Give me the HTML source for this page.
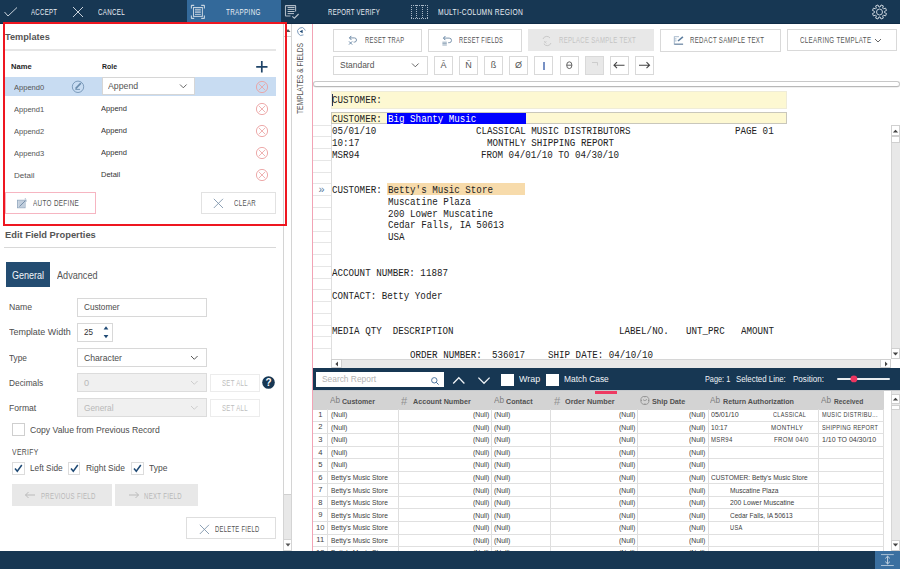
<!DOCTYPE html>
<html><head><meta charset="utf-8">
<style>
html,body{margin:0;padding:0;}
body{width:900px;height:569px;position:relative;overflow:hidden;background:#fff;font-family:'Liberation Sans', sans-serif;}
body>div, .abs{position:absolute;box-sizing:border-box;}
.t{position:absolute;white-space:pre;line-height:1;transform-origin:0 0;}
</style></head><body>
<div style="left:0px;top:0px;width:900px;height:24px;background:#173753"></div>
<div style="left:0px;top:23px;width:900px;height:1px;background:#0f2c47"></div>
<div style="left:187px;top:0px;width:94px;height:24px;background:#33699a"></div>
<svg style="position:absolute;left:3px;top:5px;" width="16" height="14" viewBox="0 0 16 14"><polyline points="1.5,7 5,11 14,2.5" fill="none" stroke="#c9d2db" stroke-width="1"/></svg>
<div id="t1" class="t" style="transform:scaleX(0.6696);left:31px;top:8.00px;font-size:9.03px;color:#e9eef3;font-weight:400;font-family:'Liberation Sans', sans-serif;letter-spacing:0.45px;">ACCEPT</div>
<svg style="position:absolute;left:72px;top:6px;" width="12" height="12" viewBox="0 0 12 12"><path d="M1,1 L11,11 M11,1 L1,11" stroke="#c9d2db" stroke-width="1"/></svg>
<div id="t2" class="t" style="transform:scaleX(0.6902);left:97.9px;top:8.00px;font-size:9.03px;color:#e9eef3;font-weight:400;font-family:'Liberation Sans', sans-serif;letter-spacing:0.45px;">CANCEL</div>
<svg style="position:absolute;left:190px;top:4px;" width="16" height="16" viewBox="0 0 16 16"><path d="M1.4,4.4 V1.8 Q1.4,1.4 1.8,1.4 H4.2 M11.2,1.4 H14 Q14.4,1.4 14.4,1.8 V4.4 M14.4,11.4 V14 Q14.4,14.4 14,14.4 H11.2 M4.2,14.4 H1.8 Q1.4,14.4 1.4,14 V11.4" fill="none" stroke="#c4d2df" stroke-width="1.1"/><rect x="3.5" y="3.5" width="8.9" height="8.9" fill="none" stroke="#c4d2df" stroke-width="1"/><path d="M5,5.3 H10.8 M5,7 H10.8 M5,8.3 H10.8 M5,10.4 H10.8" stroke="#b9c9d8" stroke-width="1"/></svg>
<div id="t3" class="t" style="transform:scaleX(0.6987);left:226.4px;top:8.00px;font-size:9.03px;color:#e9eef3;font-weight:400;font-family:'Liberation Sans', sans-serif;letter-spacing:0.45px;">TRAPPING</div>
<svg style="position:absolute;left:284px;top:4px;" width="16" height="16" viewBox="0 0 16 16"><path d="M11.6,7.5 V2 Q11.6,1.6 11.2,1.6 H1.9 Q1.5,1.6 1.5,2 V11.6 Q1.5,12 1.9,12 H6.5" fill="none" stroke="#aeb9c5" stroke-width="1.1"/><path d="M3.6,3.5 H10.6 M3.6,5.4 H10.6 M3.6,7.5 H10.6 M3.6,9.6 H10" stroke="#b9c3cd" stroke-width="1"/><polyline points="8.3,12.3 10.4,14.2 14.6,10" fill="none" stroke="#b9c3cd" stroke-width="1.1"/></svg>
<div id="t4" class="t" style="transform:scaleX(0.6652);left:327.7px;top:8.00px;font-size:9.03px;color:#e9eef3;font-weight:400;font-family:'Liberation Sans', sans-serif;letter-spacing:0.45px;">REPORT VERIFY</div>
<svg style="position:absolute;left:410px;top:4px;" width="19" height="16" viewBox="0 0 19 16"><g fill="#a9b8c8"><rect x="1" y="1" width="1" height="1"/><rect x="6" y="1" width="1" height="1"/><rect x="12" y="1" width="1" height="1"/><rect x="17" y="1" width="1" height="1"/><rect x="1" y="3" width="1" height="1"/><rect x="6" y="3" width="1" height="1"/><rect x="12" y="3" width="1" height="1"/><rect x="17" y="3" width="1" height="1"/><rect x="1" y="5" width="1" height="1"/><rect x="6" y="5" width="1" height="1"/><rect x="12" y="5" width="1" height="1"/><rect x="17" y="5" width="1" height="1"/><rect x="1" y="7" width="1" height="1"/><rect x="6" y="7" width="1" height="1"/><rect x="12" y="7" width="1" height="1"/><rect x="17" y="7" width="1" height="1"/><rect x="1" y="9" width="1" height="1"/><rect x="6" y="9" width="1" height="1"/><rect x="12" y="9" width="1" height="1"/><rect x="17" y="9" width="1" height="1"/><rect x="1" y="11" width="1" height="1"/><rect x="6" y="11" width="1" height="1"/><rect x="12" y="11" width="1" height="1"/><rect x="17" y="11" width="1" height="1"/><rect x="1" y="13" width="1" height="1"/><rect x="6" y="13" width="1" height="1"/><rect x="12" y="13" width="1" height="1"/><rect x="17" y="13" width="1" height="1"/><rect x="1" y="1" width="1" height="1"/><rect x="1" y="14" width="1" height="1"/><rect x="3" y="1" width="1" height="1"/><rect x="3" y="14" width="1" height="1"/><rect x="5" y="1" width="1" height="1"/><rect x="5" y="14" width="1" height="1"/><rect x="7" y="1" width="1" height="1"/><rect x="7" y="14" width="1" height="1"/><rect x="9" y="1" width="1" height="1"/><rect x="9" y="14" width="1" height="1"/><rect x="11" y="1" width="1" height="1"/><rect x="11" y="14" width="1" height="1"/><rect x="13" y="1" width="1" height="1"/><rect x="13" y="14" width="1" height="1"/><rect x="15" y="1" width="1" height="1"/><rect x="15" y="14" width="1" height="1"/><rect x="17" y="1" width="1" height="1"/><rect x="17" y="14" width="1" height="1"/></g></svg>
<div id="t5" class="t" style="transform:scaleX(0.7398);left:438.3px;top:8.00px;font-size:9.03px;color:#e9eef3;font-weight:400;font-family:'Liberation Sans', sans-serif;letter-spacing:0.45px;">MULTI-COLUMN REGION</div>
<svg style="position:absolute;left:871px;top:4px;" width="17" height="17" viewBox="0 0 17 17"><polygon points="9.07,3.03 10.06,0.97 12.37,1.93 11.61,4.09 12.41,4.89 14.57,4.13 15.53,6.44 13.47,7.43 13.47,8.57 15.53,9.56 14.57,11.87 12.41,11.11 11.61,11.91 12.37,14.07 10.06,15.03 9.07,12.97 7.93,12.97 6.94,15.03 4.63,14.07 5.39,11.91 4.59,11.11 2.43,11.87 1.47,9.56 3.53,8.57 3.53,7.43 1.47,6.44 2.43,4.13 4.59,4.89 5.39,4.09 4.63,1.93 6.94,0.97 7.93,3.03" fill="none" stroke="#c9d2db" stroke-width="1" stroke-linejoin="round"/><circle cx="8.5" cy="8" r="3" fill="none" stroke="#c9d2db" stroke-width="1"/></svg>
<div style="left:282.5px;top:24px;width:9.5px;height:527px;background:#fff;border-left:1px solid #d4d4d4;border-right:1px solid #d4d4d4"></div>
<div style="left:283.5px;top:36px;width:7.5px;height:0.8px;background:#d0d0d0"></div>
<svg style="position:absolute;left:283.5px;top:27px;" width="8" height="6" viewBox="0 0 8 6"><polygon points="1.5,5 4,2 6.5,5" fill="#555"/></svg>
<div style="left:283.5px;top:493.5px;width:7.5px;height:45.5px;background:#e8e8e8;border-top:1px solid #d0d0d0"></div>
<div style="left:282.5px;top:539px;width:9.5px;height:12px;background:#fff;border:1px solid #d4d4d4"></div>
<svg style="position:absolute;left:283.5px;top:542px;" width="8" height="6" viewBox="0 0 8 6"><polygon points="1.5,1.5 4,4.5 6.5,1.5" fill="#555"/></svg>
<svg style="position:absolute;left:296.5px;top:27px;" width="10" height="10" viewBox="0 0 10 10"><circle cx="4.5" cy="4.5" r="3.9" fill="none" stroke="#6d8fb3" stroke-width="0.8" stroke-dasharray="19,5" transform="rotate(60 4.5 4.5)"/><polygon points="2.6,4.5 5.6,2.8 5.6,6.2" fill="#1f4a75"/></svg>
<div id="t6" class="t" style="left:296.0px;top:113.6px;font-size:8.3px;color:#555;transform-origin:0 0;transform:rotate(-90deg) scaleX(0.8075);">TEMPLATES &amp; FIELDS</div>
<div style="left:312px;top:24px;width:1px;height:527px;background:#f2a3b5"></div>
<div id="t7" class="t" style="transform:scaleX(0.9237);left:5.4px;top:32.00px;font-size:9.96px;color:#555;font-weight:700;font-family:'Liberation Sans', sans-serif;">Templates</div>
<div style="left:5px;top:49px;width:271px;height:2px;background:#e6e6e6"></div>
<div id="t8" class="t" style="transform:scaleX(0.9602);left:11px;top:63.00px;font-size:7.89px;color:#1e1e1e;font-weight:700;font-family:'Liberation Sans', sans-serif;">Name</div>
<div id="t9" class="t" style="transform:scaleX(0.8783);left:101.7px;top:63.00px;font-size:7.89px;color:#1e1e1e;font-weight:700;font-family:'Liberation Sans', sans-serif;">Role</div>
<svg style="position:absolute;left:255px;top:60px;" width="14" height="14" viewBox="0 0 14 14"><path d="M6.8,1 V12.5 M1.2,6.8 H12.5" stroke="#1f4468" stroke-width="1.7"/></svg>
<div style="left:5px;top:77.2px;width:271px;height:18.4px;background:#c8dcf2"></div>
<svg style="position:absolute;left:71px;top:80px;" width="14" height="14" viewBox="0 0 14 14"><circle cx="7" cy="6.8" r="5.7" fill="none" stroke="#6a8cad" stroke-width="0.8"/><path d="M4.6,8.6 L9.9,3.1" fill="none" stroke="#6a8cad" stroke-width="1.6"/><path d="M4.3,9.4 H9" fill="none" stroke="#6a8cad" stroke-width="0.9"/></svg>
<div style="left:101.7px;top:77.4px;width:93.8px;height:18.1px;background:#fff;border:1px solid #d6d6d6"></div>
<div id="t10" class="t" style="transform:scaleX(0.9387);left:107.8px;top:82.00px;font-size:9.34px;color:#555;font-weight:400;font-family:'Liberation Sans', sans-serif;">Append</div>
<svg style="position:absolute;left:178.5px;top:83px;" width="9" height="7" viewBox="0 0 9 7"><polyline points="1,1.5 4.3,4.8 7.6,1.5" fill="none" stroke="#555" stroke-width="0.9"/></svg>
<div id="t11" class="t" style="transform:scaleX(0.9578);left:13.9px;top:84.00px;font-size:7.89px;color:#555;font-weight:400;font-family:'Liberation Sans', sans-serif;">Append0</div>
<svg style="position:absolute;left:255px;top:79.9px;" width="14" height="14" viewBox="0 0 14 14"><circle cx="7" cy="7" r="5.6" fill="none" stroke="#eba0a0" stroke-width="0.9"/><path d="M3.9,3.9 L10.1,10.1 M10.1,3.9 L3.9,10.1" stroke="#eba0a0" stroke-width="0.8"/></svg>
<div id="t12" class="t" style="transform:scaleX(0.9578);left:13.9px;top:106.00px;font-size:7.89px;color:#555;font-weight:400;font-family:'Liberation Sans', sans-serif;">Append1</div>
<div id="t13" class="t" style="transform:scaleX(0.9574);left:101.4px;top:105.00px;font-size:7.89px;color:#333;font-weight:400;font-family:'Liberation Sans', sans-serif;">Append</div>
<svg style="position:absolute;left:255px;top:101.9px;" width="14" height="14" viewBox="0 0 14 14"><circle cx="7" cy="7" r="5.6" fill="none" stroke="#eba0a0" stroke-width="0.9"/><path d="M3.9,3.9 L10.1,10.1 M10.1,3.9 L3.9,10.1" stroke="#eba0a0" stroke-width="0.8"/></svg>
<div id="t14" class="t" style="transform:scaleX(0.9578);left:13.9px;top:128.00px;font-size:7.89px;color:#555;font-weight:400;font-family:'Liberation Sans', sans-serif;">Append2</div>
<div id="t15" class="t" style="transform:scaleX(0.9574);left:101.4px;top:127.00px;font-size:7.89px;color:#333;font-weight:400;font-family:'Liberation Sans', sans-serif;">Append</div>
<svg style="position:absolute;left:255px;top:123.9px;" width="14" height="14" viewBox="0 0 14 14"><circle cx="7" cy="7" r="5.6" fill="none" stroke="#eba0a0" stroke-width="0.9"/><path d="M3.9,3.9 L10.1,10.1 M10.1,3.9 L3.9,10.1" stroke="#eba0a0" stroke-width="0.8"/></svg>
<div id="t16" class="t" style="transform:scaleX(0.9578);left:13.9px;top:150.00px;font-size:7.89px;color:#555;font-weight:400;font-family:'Liberation Sans', sans-serif;">Append3</div>
<div id="t17" class="t" style="transform:scaleX(0.9574);left:101.4px;top:149.00px;font-size:7.89px;color:#333;font-weight:400;font-family:'Liberation Sans', sans-serif;">Append</div>
<svg style="position:absolute;left:255px;top:145.9px;" width="14" height="14" viewBox="0 0 14 14"><circle cx="7" cy="7" r="5.6" fill="none" stroke="#eba0a0" stroke-width="0.9"/><path d="M3.9,3.9 L10.1,10.1 M10.1,3.9 L3.9,10.1" stroke="#eba0a0" stroke-width="0.8"/></svg>
<div id="t18" class="t" style="transform:scaleX(1.0178);left:13.9px;top:172.00px;font-size:7.89px;color:#555;font-weight:400;font-family:'Liberation Sans', sans-serif;">Detail</div>
<div id="t19" class="t" style="transform:scaleX(0.9533);left:101.4px;top:171.00px;font-size:7.89px;color:#333;font-weight:400;font-family:'Liberation Sans', sans-serif;">Detail</div>
<svg style="position:absolute;left:255px;top:167.9px;" width="14" height="14" viewBox="0 0 14 14"><circle cx="7" cy="7" r="5.6" fill="none" stroke="#eba0a0" stroke-width="0.9"/><path d="M3.9,3.9 L10.1,10.1 M10.1,3.9 L3.9,10.1" stroke="#eba0a0" stroke-width="0.8"/></svg>
<div style="left:5px;top:192.2px;width:90.6px;height:22.2px;background:#fff;border:1px solid #f6b5c1"></div>
<svg style="position:absolute;left:16px;top:197px;" width="12" height="12" viewBox="0 0 12 12"><rect x="1.5" y="3.2" width="7.6" height="7.6" fill="#d5dee8" stroke="#8fa6bd" stroke-width="0.8"/><path d="M2.5,5 H8 M2.5,7 H8 M2.5,9 H8" stroke="#9fb3c7" stroke-width="0.7"/><path d="M3.5,9.5 L9.5,3.5" stroke="#6f8aa5" stroke-width="0.9"/><path d="M9.3,1.2 V2.6 M10.8,3.2 H9.6 M10.6,5 L9.8,4.2" stroke="#8fa6bd" stroke-width="0.8"/></svg>
<div id="t20" class="t" style="transform:scaleX(0.7525);left:33.3px;top:199.00px;font-size:8.41px;color:#555;font-weight:400;font-family:'Liberation Sans', sans-serif;letter-spacing:0.45px;">AUTO DEFINE</div>
<div style="left:200.6px;top:192.2px;width:75.2px;height:22.2px;background:#fff;border:1px solid #e2e2e2"></div>
<svg style="position:absolute;left:213px;top:197.5px;" width="11" height="11" viewBox="0 0 11 11"><path d="M0.8,0.8 L10,10 M10,0.8 L0.8,10" stroke="#7f95ab" stroke-width="0.9"/></svg>
<div id="t21" class="t" style="transform:scaleX(0.7274);left:233.9px;top:199.00px;font-size:8.41px;color:#555;font-weight:400;font-family:'Liberation Sans', sans-serif;letter-spacing:0.45px;">CLEAR</div>
<div style="left:3px;top:22px;width:284px;height:203.6px;border:2.2px solid #ee1620"></div>
<div id="t22" class="t" style="transform:scaleX(0.9577);left:5px;top:230.00px;font-size:9.76px;color:#555;font-weight:700;font-family:'Liberation Sans', sans-serif;">Edit Field Properties</div>
<div style="left:4px;top:247px;width:272px;height:1px;background:#d8d8d8"></div>
<div style="left:5.85px;top:261.8px;width:44.45px;height:24.8px;background:#234c71"></div>
<div id="t23" class="t" style="transform:scaleX(0.8787);left:11.9px;top:271.00px;font-size:10.28px;color:#f2f5f8;font-weight:400;font-family:'Liberation Sans', sans-serif;">General</div>
<div id="t24" class="t" style="transform:scaleX(0.8889);left:56.6px;top:271.00px;font-size:10.28px;color:#555;font-weight:400;font-family:'Liberation Sans', sans-serif;">Advanced</div>
<div id="t25" class="t" style="transform:scaleX(0.9489);left:9px;top:303.00px;font-size:9.13px;color:#4d4d4d;font-weight:400;font-family:'Liberation Sans', sans-serif;">Name</div>
<div style="left:77.2px;top:298.3px;width:129.6px;height:18.3px;background:#fff;border:1px solid #d8d8d8"></div>
<div id="t26" class="t" style="transform:scaleX(0.8973);left:84.3px;top:303.00px;font-size:9.13px;color:#4d4d4d;font-weight:400;font-family:'Liberation Sans', sans-serif;">Customer</div>
<div id="t27" class="t" style="transform:scaleX(0.9795);left:8.9px;top:328.00px;font-size:9.13px;color:#4d4d4d;font-weight:400;font-family:'Liberation Sans', sans-serif;">Template Width</div>
<div style="left:77.2px;top:323.3px;width:35.5px;height:18.3px;background:#fff;border:1px solid #d8d8d8"></div>
<div id="t28" class="t" style="transform:scaleX(0.8862);left:84.3px;top:328.00px;font-size:9.13px;color:#333;font-weight:400;font-family:'Liberation Sans', sans-serif;">25</div>
<svg style="position:absolute;left:102px;top:325px;" width="8" height="15" viewBox="0 0 8 15"><polygon points="1.6,4.4 4,1.2 6.4,4.4" fill="#1f4a75"/><polygon points="1.6,10 4,13.2 6.4,10" fill="#1f4a75"/></svg>
<div id="t29" class="t" style="transform:scaleX(0.9092);left:9.2px;top:354.00px;font-size:9.13px;color:#4d4d4d;font-weight:400;font-family:'Liberation Sans', sans-serif;">Type</div>
<div style="left:77.3px;top:348.3px;width:129.5px;height:18.5px;background:#fff;border:1px solid #d8d8d8"></div>
<div id="t30" class="t" style="transform:scaleX(0.9481);left:83.5px;top:354.00px;font-size:9.13px;color:#4d4d4d;font-weight:400;font-family:'Liberation Sans', sans-serif;">Character</div>
<svg style="position:absolute;left:190px;top:354.5px;" width="9" height="6" viewBox="0 0 9 6"><polyline points="1,1 4.3,4.3 7.6,1" fill="none" stroke="#444" stroke-width="0.9"/></svg>
<div id="t31" class="t" style="transform:scaleX(0.9112);left:9.2px;top:379.00px;font-size:9.13px;color:#4d4d4d;font-weight:400;font-family:'Liberation Sans', sans-serif;">Decimals</div>
<div style="left:77.3px;top:373.4px;width:129.5px;height:18.4px;background:#f0f0f0;border:1px solid #dcdcdc"></div>
<div id="t32" class="t" style="left:84px;top:379.00px;font-size:9.13px;color:#b9b9b9;font-weight:400;font-family:'Liberation Sans', sans-serif;">0</div>
<svg style="position:absolute;left:190px;top:379.5px;" width="9" height="6" viewBox="0 0 9 6"><polyline points="1,1 4.3,4.3 7.6,1" fill="none" stroke="#c8c8c8" stroke-width="0.9"/></svg>
<div style="left:210.4px;top:373.5px;width:50.1px;height:18.3px;background:#fff;border:1px solid #ececec"></div>
<div id="t33" class="t" style="transform:scaleX(0.7092);left:222.3px;top:379.00px;font-size:8.51px;color:#bdbdbd;font-weight:400;font-family:'Liberation Sans', sans-serif;letter-spacing:0.45px;">SET ALL</div>
<svg style="position:absolute;left:262px;top:376px;" width="13.5" height="13.5" viewBox="0 0 13.5 13.5"><circle cx="6.5" cy="6.5" r="6.3" fill="#173753"/><text x="6.5" y="10.3" font-size="10" font-weight="700" font-family="Liberation Sans" fill="#fff" text-anchor="middle">?</text></svg>
<div id="t34" class="t" style="transform:scaleX(0.9410);left:9.2px;top:404.00px;font-size:9.13px;color:#4d4d4d;font-weight:400;font-family:'Liberation Sans', sans-serif;">Format</div>
<div style="left:77.3px;top:398.4px;width:129.5px;height:18.9px;background:#f0f0f0;border:1px solid #dcdcdc"></div>
<div id="t35" class="t" style="transform:scaleX(0.9086);left:83.5px;top:404.00px;font-size:9.13px;color:#b9b9b9;font-weight:400;font-family:'Liberation Sans', sans-serif;">General</div>
<svg style="position:absolute;left:190px;top:404.5px;" width="9" height="6" viewBox="0 0 9 6"><polyline points="1,1 4.3,4.3 7.6,1" fill="none" stroke="#c8c8c8" stroke-width="0.9"/></svg>
<div style="left:210.4px;top:398.6px;width:50.1px;height:18.3px;background:#fff;border:1px solid #ececec"></div>
<div id="t36" class="t" style="transform:scaleX(0.7092);left:222.3px;top:404.00px;font-size:8.51px;color:#bdbdbd;font-weight:400;font-family:'Liberation Sans', sans-serif;letter-spacing:0.45px;">SET ALL</div>
<div style="left:12px;top:423.1px;width:12.7px;height:12.9px;background:#fff;border:1px solid #cfcfcf"></div>
<div id="t37" class="t" style="transform:scaleX(0.9455);left:29.7px;top:426.00px;font-size:9.13px;color:#4d4d4d;font-weight:400;font-family:'Liberation Sans', sans-serif;">Copy Value from Previous Record</div>
<div id="t38" class="t" style="transform:scaleX(0.8095);left:12.3px;top:448.00px;font-size:8.41px;color:#4d4d4d;font-weight:400;font-family:'Liberation Sans', sans-serif;letter-spacing:0.45px;">VERIFY</div>
<div style="left:12.3px;top:462px;width:12.4px;height:12.6px;background:#fff;border:1px solid #dcdcdc"></div>
<svg style="position:absolute;left:12.3px;top:462px;" width="12.4" height="12.4" viewBox="0 0 12.4 12.4"><polyline points="3,6.5 5.3,9.3 9.8,3" fill="none" stroke="#1f4a75" stroke-width="1.5"/></svg>
<div style="left:68px;top:462px;width:12.4px;height:12.6px;background:#fff;border:1px solid #dcdcdc"></div>
<svg style="position:absolute;left:68px;top:462px;" width="12.4" height="12.4" viewBox="0 0 12.4 12.4"><polyline points="3,6.5 5.3,9.3 9.8,3" fill="none" stroke="#1f4a75" stroke-width="1.5"/></svg>
<div style="left:131.4px;top:462px;width:12.4px;height:12.6px;background:#fff;border:1px solid #dcdcdc"></div>
<svg style="position:absolute;left:131.4px;top:462px;" width="12.4" height="12.4" viewBox="0 0 12.4 12.4"><polyline points="3,6.5 5.3,9.3 9.8,3" fill="none" stroke="#1f4a75" stroke-width="1.5"/></svg>
<div id="t39" class="t" style="transform:scaleX(0.8879);left:30px;top:464.00px;font-size:9.34px;color:#4d4d4d;font-weight:400;font-family:'Liberation Sans', sans-serif;">Left Side</div>
<div id="t40" class="t" style="transform:scaleX(0.9060);left:85.6px;top:464.00px;font-size:9.34px;color:#4d4d4d;font-weight:400;font-family:'Liberation Sans', sans-serif;">Right Side</div>
<div id="t41" class="t" style="transform:scaleX(0.9093);left:149px;top:464.00px;font-size:9.34px;color:#4d4d4d;font-weight:400;font-family:'Liberation Sans', sans-serif;">Type</div>
<div style="left:12px;top:483.8px;width:99.7px;height:22.5px;background:#e8e8e8"></div>
<svg style="position:absolute;left:24px;top:491px;" width="12" height="8" viewBox="0 0 12 8"><path d="M1.5,4 H11 M4.5,1 L1.5,4 L4.5,7" fill="none" stroke="#b5b5b5" stroke-width="0.9"/></svg>
<div id="t42" class="t" style="transform:scaleX(0.7209);left:40.9px;top:492.00px;font-size:8.41px;color:#b8b8b8;font-weight:400;font-family:'Liberation Sans', sans-serif;letter-spacing:0.45px;">PREVIOUS FIELD</div>
<div style="left:115px;top:484px;width:83.4px;height:22.4px;background:#e8e8e8"></div>
<svg style="position:absolute;left:127.5px;top:491px;" width="12" height="8" viewBox="0 0 12 8"><path d="M1,4 H10.5 M7.5,1 L10.5,4 L7.5,7" fill="none" stroke="#b5b5b5" stroke-width="0.9"/></svg>
<div id="t43" class="t" style="transform:scaleX(0.7164);left:144px;top:492.00px;font-size:8.41px;color:#b8b8b8;font-weight:400;font-family:'Liberation Sans', sans-serif;letter-spacing:0.45px;">NEXT FIELD</div>
<div style="left:186.4px;top:517.4px;width:89.2px;height:22px;background:#fff;border:1px solid #dedede"></div>
<svg style="position:absolute;left:199px;top:523.5px;" width="11" height="11" viewBox="0 0 11 11"><path d="M0.8,0.8 L10,10 M10,0.8 L0.8,10" stroke="#7f95ab" stroke-width="0.9"/></svg>
<div id="t44" class="t" style="transform:scaleX(0.6926);left:215.4px;top:525.00px;font-size:8.41px;color:#555;font-weight:400;font-family:'Liberation Sans', sans-serif;letter-spacing:0.45px;">DELETE FIELD</div>
<div style="left:333.3px;top:29.1px;width:88.4px;height:22.5px;background:#fff;border:1px solid #d9d9d9"></div>
<svg style="position:absolute;left:346.5px;top:34.5px;" width="12" height="12" viewBox="0 0 12 12"><path d="M4.3,0.9 L2.5,2.9 L4.3,4.9" fill="none" stroke="#5e7fa0" stroke-width="1"/><path d="M2.5,2.9 H7.4 A2.1,2.1 0 0 1 7.4,7.1 H6.6" fill="none" stroke="#6f8aa5" stroke-width="0.9"/><path d="M2,6.4 L5.2,9.6 M5.2,6.4 L2,9.6" stroke="#5e7fa0" stroke-width="0.9"/></svg>
<div id="t45" class="t" style="transform:scaleX(0.7019);left:364.7px;top:36.00px;font-size:8.3px;color:#555;font-weight:400;font-family:'Liberation Sans', sans-serif;letter-spacing:0.45px;">RESET TRAP</div>
<div style="left:428.3px;top:29.1px;width:93.4px;height:22.5px;background:#fff;border:1px solid #d9d9d9"></div>
<svg style="position:absolute;left:441px;top:34.5px;" width="12" height="12" viewBox="0 0 12 12"><path d="M4.3,1.1 L2.5,3.1 L4.3,5.1" fill="none" stroke="#5e7fa0" stroke-width="1"/><path d="M2.5,3.1 H8.2 A2.3,2.3 0 0 1 8.2,7.7 H7.2" fill="none" stroke="#6f8aa5" stroke-width="0.9"/><path d="M1.4,7.2 H5.8 M1.4,8.6 H5.8 M1.4,10 H5.8" stroke="#8aa0b6" stroke-width="0.9"/></svg>
<div id="t46" class="t" style="transform:scaleX(0.6879);left:459.4px;top:36.00px;font-size:8.3px;color:#555;font-weight:400;font-family:'Liberation Sans', sans-serif;letter-spacing:0.45px;">RESET FIELDS</div>
<div style="left:528.3px;top:29px;width:125.7px;height:22.2px;background:#e8e8e8"></div>
<svg style="position:absolute;left:540.5px;top:34.5px;" width="12" height="12" viewBox="0 0 12 12"><path d="M2,4 A4,4 0 0 1 9,3 M10,8 A4,4 0 0 1 3,9" fill="none" stroke="#c9c9c9" stroke-width="1"/><path d="M3,6 L5.5,8.5 M5.5,6 L3,8.5" stroke="#c9c9c9" stroke-width="0.8"/></svg>
<div id="t47" class="t" style="transform:scaleX(0.7233);left:558.7px;top:36.00px;font-size:8.3px;color:#c4c4c4;font-weight:400;font-family:'Liberation Sans', sans-serif;letter-spacing:0.45px;">REPLACE SAMPLE TEXT</div>
<div style="left:660.2px;top:29px;width:120.5px;height:22.5px;background:#fff;border:1px solid #d9d9d9"></div>
<svg style="position:absolute;left:672.5px;top:34.5px;" width="12" height="12" viewBox="0 0 12 12"><path d="M1.3,1.7 H6 M1.3,3.9 H3.5 M1.3,5.9 H3.5" stroke="#9fb3c7" stroke-width="0.9"/><path d="M1.3,1.5 V9.5" stroke="#9fb3c7" stroke-width="0.9"/><path d="M1.3,9.2 H10.1" stroke="#6f8aa5" stroke-width="1.3"/><path d="M5,6 L9.9,1.8" fill="none" stroke="#5e7fa0" stroke-width="1.6"/></svg>
<div id="t48" class="t" style="transform:scaleX(0.7321);left:689.8px;top:36.00px;font-size:8.3px;color:#555;font-weight:400;font-family:'Liberation Sans', sans-serif;letter-spacing:0.45px;">REDACT SAMPLE TEXT</div>
<div style="left:786.7px;top:28.9px;width:110.4px;height:22.4px;background:#fff;border:1px solid #d9d9d9"></div>
<div id="t49" class="t" style="transform:scaleX(0.7488);left:800px;top:36.00px;font-size:8.3px;color:#555;font-weight:400;font-family:'Liberation Sans', sans-serif;letter-spacing:0.45px;">CLEARING TEMPLATE</div>
<svg style="position:absolute;left:874px;top:37.5px;" width="8" height="6" viewBox="0 0 8 6"><polyline points="1,1 4,4 7,1" fill="none" stroke="#555" stroke-width="0.9"/></svg>
<div style="left:333.3px;top:56px;width:94.5px;height:18.6px;background:#fff;border:1px solid #d9d9d9"></div>
<div id="t50" class="t" style="transform:scaleX(0.9286);left:339.8px;top:61.00px;font-size:9.13px;color:#555;font-weight:400;font-family:'Liberation Sans', sans-serif;">Standard</div>
<svg style="position:absolute;left:411px;top:62px;" width="9" height="7" viewBox="0 0 9 7"><polyline points="1,1.5 4.3,4.8 7.6,1.5" fill="none" stroke="#555" stroke-width="0.9"/></svg>
<div style="left:434.2px;top:56px;width:18.6px;height:18.6px;background:#fff;border:1px solid #d9d9d9"></div>
<div class="t" style="left:434.2px;width:18.6px;text-align:center;top:60.58px;font-size:9px;color:#555">Ā</div>
<div style="left:459.2px;top:56px;width:18.6px;height:18.6px;background:#fff;border:1px solid #d9d9d9"></div>
<div class="t" style="left:459.2px;width:18.6px;text-align:center;top:60.58px;font-size:9px;color:#555">Ñ</div>
<div style="left:484.2px;top:56px;width:18.6px;height:18.6px;background:#fff;border:1px solid #d9d9d9"></div>
<div class="t" style="left:484.2px;width:18.6px;text-align:center;top:60.58px;font-size:9px;color:#555">ß</div>
<div style="left:509.2px;top:56px;width:18.6px;height:18.6px;background:#fff;border:1px solid #d9d9d9"></div>
<div class="t" style="left:509.2px;width:18.6px;text-align:center;top:60.58px;font-size:9px;color:#555">Ø</div>
<div style="left:534.4px;top:56px;width:18.6px;height:18.6px;background:#fff;border:1px solid #d9d9d9"></div>
<div style="left:543.4px;top:62px;width:1.2px;height:8px;background:#7891c4"></div>
<div style="left:560.2px;top:56px;width:18.6px;height:18.6px;background:#fff;border:1px solid #d9d9d9"></div>
<svg style="position:absolute;left:565.2px;top:60px;" width="9" height="10" viewBox="0 0 9 10"><ellipse cx="4.3" cy="5.2" rx="2.6" ry="3.4" fill="none" stroke="#555" stroke-width="0.9"/><path d="M1.7,5.2 H6.9" stroke="#555" stroke-width="0.9"/></svg>
<div style="left:585.3px;top:56px;width:18.6px;height:18.6px;background:#e8e8e8;border:1px solid #d9d9d9"></div>
<svg style="position:absolute;left:588.3px;top:60px;" width="13" height="8" viewBox="0 0 13 8"><path d="M4,2.5 H9.5 V5.5" fill="none" stroke="#c8c8c8" stroke-width="0.9"/></svg>
<div style="left:610.2px;top:56px;width:18.6px;height:18.6px;background:#fff;border:1px solid #d9d9d9"></div>
<svg style="position:absolute;left:613.2px;top:61px;" width="13" height="8" viewBox="0 0 13 8"><path d="M1,4.2 H11.5 M4,1.2 L1,4.2 L4,7.2" fill="none" stroke="#444" stroke-width="1.1"/></svg>
<div style="left:635.2px;top:56px;width:18.6px;height:18.6px;background:#fff;border:1px solid #d9d9d9"></div>
<svg style="position:absolute;left:638.2px;top:61px;" width="13" height="8" viewBox="0 0 13 8"><path d="M1,4.2 H11.5 M8.5,1.2 L11.5,4.2 L8.5,7.2" fill="none" stroke="#444" stroke-width="1.1"/></svg>
<div style="left:313px;top:81.3px;width:586.5px;height:6.2px;background:#fff;border:1px solid #c8c8c8;border-bottom-color:#b8b8b8;border-radius:3px;box-shadow:0 0.6px 0 #e2e2e2"></div>
<div style="left:331px;top:112px;width:0.8px;height:247px;background:#dedede"></div>
<div style="left:313px;top:124.6px;width:18px;height:1px;background:#e6e6e6"></div>
<div style="left:313px;top:136.37px;width:18px;height:1px;background:#e6e6e6"></div>
<div style="left:313px;top:148.14px;width:18px;height:1px;background:#e6e6e6"></div>
<div style="left:313px;top:159.91px;width:18px;height:1px;background:#e6e6e6"></div>
<div style="left:313px;top:171.68px;width:18px;height:1px;background:#e6e6e6"></div>
<div style="left:313px;top:183.45px;width:18px;height:1px;background:#e6e6e6"></div>
<div style="left:313px;top:195.22px;width:18px;height:1px;background:#e6e6e6"></div>
<div style="left:313px;top:206.99px;width:18px;height:1px;background:#e6e6e6"></div>
<div style="left:313px;top:218.76px;width:18px;height:1px;background:#e6e6e6"></div>
<div style="left:313px;top:230.52999999999997px;width:18px;height:1px;background:#e6e6e6"></div>
<div style="left:313px;top:242.29999999999998px;width:18px;height:1px;background:#e6e6e6"></div>
<div style="left:313px;top:254.07px;width:18px;height:1px;background:#e6e6e6"></div>
<div style="left:313px;top:265.84000000000003px;width:18px;height:1px;background:#e6e6e6"></div>
<div style="left:313px;top:277.61px;width:18px;height:1px;background:#e6e6e6"></div>
<div style="left:313px;top:289.38px;width:18px;height:1px;background:#e6e6e6"></div>
<div style="left:313px;top:301.15px;width:18px;height:1px;background:#e6e6e6"></div>
<div style="left:313px;top:312.91999999999996px;width:18px;height:1px;background:#e6e6e6"></div>
<div style="left:313px;top:324.69px;width:18px;height:1px;background:#e6e6e6"></div>
<div style="left:313px;top:336.46px;width:18px;height:1px;background:#e6e6e6"></div>
<div style="left:313px;top:348.23px;width:18px;height:1px;background:#e6e6e6"></div>
<div style="left:331.2px;top:90.8px;width:455.6px;height:17.9px;background:#fdf8d2;border:1px solid #efecd8"></div>
<div style="left:331.2px;top:112.2px;width:455.8px;height:12.3px;background:#fdf8d2;border:1px solid #c9c7bb"></div>
<div style="left:332px;top:94px;width:1px;height:11.7px;background:#2b3556"></div>
<div style="left:386.7px;top:183.4px;width:138.3px;height:12px;background:#f7dbab"></div>
<div style="left:387.3px;top:112.9px;width:138.7px;height:11.2px;background:#0000ff"></div>
<div id="t51" class="t" style="transform:scaleX(0.8936);left:332.3px;top:95.00px;font-size:10.3px;color:#222;font-weight:400;font-family:'Liberation Mono', monospace;">CUSTOMER:</div>
<div id="t52" class="t" style="transform:scaleX(0.8936);left:332.3px;top:114.00px;font-size:10.3px;color:#222;font-weight:400;font-family:'Liberation Mono', monospace;">CUSTOMER:</div>
<div id="t53" class="t" style="transform:scaleX(0.8937);left:387.53000000000003px;top:114.00px;font-size:10.3px;color:#fff;font-weight:400;font-family:'Liberation Mono', monospace;">Big Shanty Music</div>
<div id="t54" class="t" style="transform:scaleX(0.8937);left:332.3px;top:126.00px;font-size:10.3px;color:#222;font-weight:400;font-family:'Liberation Mono', monospace;">05/01/10</div>
<div id="t55" class="t" style="transform:scaleX(0.8937);left:475.898px;top:126.00px;font-size:10.3px;color:#222;font-weight:400;font-family:'Liberation Mono', monospace;">CLASSICAL MUSIC DISTRIBUTORS</div>
<div id="t56" class="t" style="transform:scaleX(0.8936);left:735.479px;top:126.00px;font-size:10.3px;color:#222;font-weight:400;font-family:'Liberation Mono', monospace;">PAGE 01</div>
<div id="t57" class="t" style="transform:scaleX(0.8935);left:332.3px;top:138.00px;font-size:10.3px;color:#222;font-weight:400;font-family:'Liberation Mono', monospace;">10:17</div>
<div id="t58" class="t" style="transform:scaleX(0.8938);left:486.944px;top:138.00px;font-size:10.3px;color:#222;font-weight:400;font-family:'Liberation Mono', monospace;">MONTHLY SHIPPING REPORT</div>
<div id="t59" class="t" style="transform:scaleX(0.8935);left:332.3px;top:150.00px;font-size:10.3px;color:#222;font-weight:400;font-family:'Liberation Mono', monospace;">MSR94</div>
<div id="t60" class="t" style="transform:scaleX(0.8938);left:481.421px;top:150.00px;font-size:10.3px;color:#222;font-weight:400;font-family:'Liberation Mono', monospace;">FROM 04/01/10 TO 04/30/10</div>
<div id="t61" class="t" style="transform:scaleX(0.8936);left:332.3px;top:185.00px;font-size:10.3px;color:#222;font-weight:400;font-family:'Liberation Mono', monospace;">CUSTOMER:</div>
<div id="t62" class="t" style="transform:scaleX(0.8938);left:387.53000000000003px;top:185.00px;font-size:10.3px;color:#222;font-weight:400;font-family:'Liberation Mono', monospace;">Betty's Music Store</div>
<div id="t63" class="t" style="transform:scaleX(0.8938);left:387.53000000000003px;top:197.00px;font-size:10.3px;color:#222;font-weight:400;font-family:'Liberation Mono', monospace;">Muscatine Plaza</div>
<div id="t64" class="t" style="transform:scaleX(0.8938);left:387.53000000000003px;top:209.00px;font-size:10.3px;color:#222;font-weight:400;font-family:'Liberation Mono', monospace;">200 Lower Muscatine</div>
<div id="t65" class="t" style="transform:scaleX(0.8938);left:387.53000000000003px;top:220.00px;font-size:10.3px;color:#222;font-weight:400;font-family:'Liberation Mono', monospace;">Cedar Falls, IA 50613</div>
<div id="t66" class="t" style="transform:scaleX(0.8934);left:387.53000000000003px;top:232.00px;font-size:10.3px;color:#222;font-weight:400;font-family:'Liberation Mono', monospace;">USA</div>
<div id="t67" class="t" style="transform:scaleX(0.8938);left:332.3px;top:268.00px;font-size:10.3px;color:#222;font-weight:400;font-family:'Liberation Mono', monospace;">ACCOUNT NUMBER: 11887</div>
<div id="t68" class="t" style="transform:scaleX(0.8937);left:332.3px;top:291.00px;font-size:10.3px;color:#222;font-weight:400;font-family:'Liberation Mono', monospace;">CONTACT: Betty Yoder</div>
<div id="t69" class="t" style="transform:scaleX(0.8937);left:332.3px;top:326.00px;font-size:10.3px;color:#222;font-weight:400;font-family:'Liberation Mono', monospace;">MEDIA QTY  DESCRIPTION</div>
<div id="t70" class="t" style="transform:scaleX(0.8936);left:619.496px;top:326.00px;font-size:10.3px;color:#222;font-weight:400;font-family:'Liberation Mono', monospace;">LABEL/NO.</div>
<div id="t71" class="t" style="transform:scaleX(0.8936);left:685.7719999999999px;top:326.00px;font-size:10.3px;color:#222;font-weight:400;font-family:'Liberation Mono', monospace;">UNT_PRC</div>
<div id="t72" class="t" style="transform:scaleX(0.8937);left:741.002px;top:326.00px;font-size:10.3px;color:#222;font-weight:400;font-family:'Liberation Mono', monospace;">AMOUNT</div>
<div id="t73" class="t" style="transform:scaleX(0.8936);left:409.622px;top:350.00px;font-size:10.3px;color:#222;font-weight:400;font-family:'Liberation Mono', monospace;">ORDER NUMBER:</div>
<div id="t74" class="t" style="transform:scaleX(0.8937);left:492.467px;top:350.00px;font-size:10.3px;color:#222;font-weight:400;font-family:'Liberation Mono', monospace;">536017</div>
<div id="t75" class="t" style="transform:scaleX(0.8938);left:547.697px;top:350.00px;font-size:10.3px;color:#222;font-weight:400;font-family:'Liberation Mono', monospace;">SHIP DATE: 04/10/10</div>
<div id="t76" class="t" style="left:318.6px;top:184.00px;font-size:10.9px;color:#5a7ca0;font-weight:400;font-family:'Liberation Sans', sans-serif;">»</div>
<div style="left:890.5px;top:125px;width:9.5px;height:234.2px;background:#e8e8e8;border-left:1px solid #d6d6d6"></div>
<div style="left:890.5px;top:125px;width:9.5px;height:11px;background:#fff;border:1px solid #d0d0d0"></div>
<svg style="position:absolute;left:891px;top:127.5px;" width="9" height="6" viewBox="0 0 9 6"><polygon points="1.8,4.6 4.5,1.8 7.2,4.6" fill="#444"/></svg>
<div style="left:890.5px;top:136px;width:9.5px;height:6.7px;background:#fff;border:1px solid #d0d0d0"></div>
<div style="left:890.5px;top:348px;width:9.5px;height:10.5px;background:#fff;border:1px solid #d0d0d0"></div>
<svg style="position:absolute;left:891px;top:350.5px;" width="9" height="6" viewBox="0 0 9 6"><polygon points="1.8,1.6 4.5,4.4 7.2,1.6" fill="#444"/></svg>
<div style="left:331.3px;top:359.2px;width:559.3px;height:9px;background:#e8e8e8;border-top:1px solid #d6d6d6"></div>
<div style="left:331.3px;top:359.2px;width:11.2px;height:9px;background:#fff;border:1px solid #d0d0d0"></div>
<svg style="position:absolute;left:333px;top:360px;" width="8" height="8" viewBox="0 0 8 8"><polygon points="5,1.6 2.4,4 5,6.4" fill="#444"/></svg>
<div style="left:879.6px;top:359.2px;width:11px;height:9px;background:#fff;border:1px solid #d0d0d0"></div>
<svg style="position:absolute;left:881.5px;top:360px;" width="8" height="8" viewBox="0 0 8 8"><polygon points="3,1.6 5.6,4 3,6.4" fill="#444"/></svg>
<div style="left:313px;top:368.4px;width:587px;height:21.6px;background:#173753"></div>
<div style="left:315.8px;top:371.8px;width:128.4px;height:15.1px;background:#fff"></div>
<div id="t77" class="t" style="transform:scaleX(0.9288);left:321.8px;top:375.00px;font-size:9.03px;color:#b3b3b3;font-weight:400;font-family:'Liberation Sans', sans-serif;">Search Report</div>
<svg style="position:absolute;left:430px;top:375.5px;" width="10" height="10" viewBox="0 0 10 10"><circle cx="4.3" cy="4.3" r="2.7" fill="none" stroke="#3d6a96" stroke-width="0.9"/><path d="M6.3,6.3 L8.6,8.6" stroke="#3d6a96" stroke-width="1.0"/></svg>
<svg style="position:absolute;left:452px;top:375.5px;" width="14" height="9" viewBox="0 0 14 9"><polyline points="1.2,7.5 6.8,1.8 12.4,7.5" fill="none" stroke="#f0f3f6" stroke-width="1.3"/></svg>
<svg style="position:absolute;left:477px;top:375.5px;" width="14" height="9" viewBox="0 0 14 9"><polyline points="1.4,1.6 7,7.3 12.6,1.6" fill="none" stroke="#f0f3f6" stroke-width="1.3"/></svg>
<div style="left:501.1px;top:373.6px;width:12.8px;height:12.2px;background:#fff"></div>
<div id="t78" class="t" style="transform:scaleX(0.9864);left:518.9px;top:375.00px;font-size:9.03px;color:#f2f5f8;font-weight:400;font-family:'Liberation Sans', sans-serif;">Wrap</div>
<div style="left:546.1px;top:373.6px;width:12.6px;height:12.2px;background:#fff"></div>
<div id="t79" class="t" style="transform:scaleX(0.9312);left:563.9px;top:375.00px;font-size:9.03px;color:#f2f5f8;font-weight:400;font-family:'Liberation Sans', sans-serif;">Match Case</div>
<div id="t80" class="t" style="transform:scaleX(0.8105);left:705px;top:375.00px;font-size:9.03px;color:#f2f5f8;font-weight:400;font-family:'Liberation Sans', sans-serif;">Page: 1</div>
<div id="t81" class="t" style="transform:scaleX(0.8715);left:736.2px;top:375.00px;font-size:9.03px;color:#f2f5f8;font-weight:400;font-family:'Liberation Sans', sans-serif;">Selected Line:</div>
<div id="t82" class="t" style="transform:scaleX(0.8932);left:793.2px;top:375.00px;font-size:9.03px;color:#f2f5f8;font-weight:400;font-family:'Liberation Sans', sans-serif;">Position:</div>
<div style="left:837.2px;top:378.2px;width:52.6px;height:2.1px;background:#e9ecef;border-radius:1px"></div>
<svg style="position:absolute;left:850px;top:375.3px;" width="8" height="8" viewBox="0 0 8 8"><circle cx="3.9" cy="3.9" r="3.4" fill="#ec3560"/></svg>
<div style="left:313px;top:390px;width:577.5px;height:161px;background:#fff"></div>
<div style="left:313px;top:391px;width:570.5px;height:18.6px;background:#d3d3d3"></div>
<div style="left:883.5px;top:391px;width:7px;height:160px;background:#fff"></div>
<div style="left:313px;top:390px;width:587px;height:1.4px;background:#c6c9cc"></div>
<div style="left:327.0px;top:409.3px;width:1px;height:142px;background:#dedede"></div>
<div style="left:398.0px;top:409.3px;width:1px;height:142px;background:#dedede"></div>
<div style="left:490.8px;top:409.3px;width:1px;height:142px;background:#dedede"></div>
<div style="left:550.0px;top:409.3px;width:1px;height:142px;background:#dedede"></div>
<div style="left:636.5px;top:409.3px;width:1px;height:142px;background:#dedede"></div>
<div style="left:707.8px;top:409.3px;width:1px;height:142px;background:#dedede"></div>
<div style="left:818.0px;top:409.3px;width:1px;height:142px;background:#dedede"></div>
<div style="left:882.8px;top:409.3px;width:1px;height:142px;background:#dedede"></div>
<div style="left:313px;top:420.5px;width:570.5px;height:1px;background:#e0e0e0"></div>
<div style="left:313px;top:433.07px;width:570.5px;height:1px;background:#e0e0e0"></div>
<div style="left:313px;top:445.64px;width:570.5px;height:1px;background:#e0e0e0"></div>
<div style="left:313px;top:458.21px;width:570.5px;height:1px;background:#e0e0e0"></div>
<div style="left:313px;top:470.78px;width:570.5px;height:1px;background:#e0e0e0"></div>
<div style="left:313px;top:483.35px;width:570.5px;height:1px;background:#e0e0e0"></div>
<div style="left:313px;top:495.92px;width:570.5px;height:1px;background:#e0e0e0"></div>
<div style="left:313px;top:508.49px;width:570.5px;height:1px;background:#e0e0e0"></div>
<div style="left:313px;top:521.06px;width:570.5px;height:1px;background:#e0e0e0"></div>
<div style="left:313px;top:533.63px;width:570.5px;height:1px;background:#e0e0e0"></div>
<div style="left:313px;top:546.2px;width:570.5px;height:1px;background:#e0e0e0"></div>
<div id="t83" class="t" style="transform:scaleX(0.9370);left:329.5px;top:396.00px;font-size:8.72px;color:#7c7c7c;font-weight:400;font-family:'Liberation Sans', sans-serif;">Ab</div>
<div id="t84" class="t" style="transform:scaleX(0.8976);left:342px;top:398.00px;font-size:7.89px;color:#505050;font-weight:700;font-family:'Liberation Sans', sans-serif;">Customer</div>
<div id="t85" class="t" style="transform:scaleX(1.0306);left:401.4px;top:396.00px;font-size:10.8px;color:#909090;font-weight:400;font-family:'Liberation Sans', sans-serif;">#</div>
<div id="t86" class="t" style="transform:scaleX(0.9093);left:413px;top:398.00px;font-size:7.89px;color:#505050;font-weight:700;font-family:'Liberation Sans', sans-serif;">Account Number</div>
<div id="t87" class="t" style="transform:scaleX(0.9370);left:493.6px;top:396.00px;font-size:8.72px;color:#7c7c7c;font-weight:400;font-family:'Liberation Sans', sans-serif;">Ab</div>
<div id="t88" class="t" style="transform:scaleX(0.9041);left:506.2px;top:398.00px;font-size:7.89px;color:#505050;font-weight:700;font-family:'Liberation Sans', sans-serif;">Contact</div>
<div id="t89" class="t" style="transform:scaleX(1.0306);left:553.6px;top:396.00px;font-size:10.8px;color:#909090;font-weight:400;font-family:'Liberation Sans', sans-serif;">#</div>
<div id="t90" class="t" style="transform:scaleX(0.9309);left:565px;top:398.00px;font-size:7.89px;color:#505050;font-weight:700;font-family:'Liberation Sans', sans-serif;">Order Number</div>
<svg style="position:absolute;left:639.5px;top:396px;" width="10" height="10" viewBox="0 0 10 10"><circle cx="4.9" cy="4.4" r="4.1" fill="none" stroke="#8c8c8c" stroke-width="0.8"/><path d="M3,3.7 L4.9,4.7 L7,3.4" fill="none" stroke="#8c8c8c" stroke-width="0.8"/><path d="M4.9,0.4 V1.3 M4.9,7.5 V8.4 M0.9,4.4 H1.8 M8,4.4 H8.9" stroke="#777" stroke-width="0.8"/></svg>
<div id="t91" class="t" style="transform:scaleX(0.9166);left:652.1px;top:398.00px;font-size:7.89px;color:#505050;font-weight:700;font-family:'Liberation Sans', sans-serif;">Ship Date</div>
<div id="t92" class="t" style="transform:scaleX(0.9370);left:710px;top:396.00px;font-size:8.72px;color:#7c7c7c;font-weight:400;font-family:'Liberation Sans', sans-serif;">Ab</div>
<div id="t93" class="t" style="transform:scaleX(0.9101);left:723px;top:398.00px;font-size:7.89px;color:#505050;font-weight:700;font-family:'Liberation Sans', sans-serif;">Return Authorization</div>
<div id="t94" class="t" style="transform:scaleX(0.9370);left:820.6px;top:396.00px;font-size:8.72px;color:#7c7c7c;font-weight:400;font-family:'Liberation Sans', sans-serif;">Ab</div>
<div id="t95" class="t" style="transform:scaleX(0.8441);left:833.9px;top:398.00px;font-size:7.89px;color:#505050;font-weight:700;font-family:'Liberation Sans', sans-serif;">Received</div>
<div class="t" style="left:313px;width:14.5px;text-align:center;top:410.79px;font-size:7.58px;color:#444">1</div>
<div id="t96" class="t" style="transform:scaleX(0.9056);left:330.8px;top:411.00px;font-size:7.58px;color:#3c3c3c;font-weight:400;font-family:'Liberation Sans', sans-serif;">(Null)</div>
<div id="t97" class="t" style="transform:scaleX(0.9056);left:472.6px;top:411.00px;font-size:7.58px;color:#3c3c3c;font-weight:400;font-family:'Liberation Sans', sans-serif;">(Null)</div>
<div id="t98" class="t" style="transform:scaleX(0.9056);left:494.4px;top:411.00px;font-size:7.58px;color:#3c3c3c;font-weight:400;font-family:'Liberation Sans', sans-serif;">(Null)</div>
<div id="t99" class="t" style="transform:scaleX(0.9056);left:618.6px;top:411.00px;font-size:7.58px;color:#3c3c3c;font-weight:400;font-family:'Liberation Sans', sans-serif;">(Null)</div>
<div id="t100" class="t" style="transform:scaleX(0.9056);left:689.1px;top:411.00px;font-size:7.58px;color:#3c3c3c;font-weight:400;font-family:'Liberation Sans', sans-serif;">(Null)</div>
<div class="t" style="left:313px;width:14.5px;text-align:center;top:423.36px;font-size:7.58px;color:#444">2</div>
<div id="t101" class="t" style="transform:scaleX(0.9056);left:330.8px;top:424.00px;font-size:7.58px;color:#3c3c3c;font-weight:400;font-family:'Liberation Sans', sans-serif;">(Null)</div>
<div id="t102" class="t" style="transform:scaleX(0.9056);left:472.6px;top:424.00px;font-size:7.58px;color:#3c3c3c;font-weight:400;font-family:'Liberation Sans', sans-serif;">(Null)</div>
<div id="t103" class="t" style="transform:scaleX(0.9056);left:494.4px;top:424.00px;font-size:7.58px;color:#3c3c3c;font-weight:400;font-family:'Liberation Sans', sans-serif;">(Null)</div>
<div id="t104" class="t" style="transform:scaleX(0.9056);left:618.6px;top:424.00px;font-size:7.58px;color:#3c3c3c;font-weight:400;font-family:'Liberation Sans', sans-serif;">(Null)</div>
<div id="t105" class="t" style="transform:scaleX(0.9056);left:689.1px;top:424.00px;font-size:7.58px;color:#3c3c3c;font-weight:400;font-family:'Liberation Sans', sans-serif;">(Null)</div>
<div class="t" style="left:313px;width:14.5px;text-align:center;top:435.93px;font-size:7.58px;color:#444">3</div>
<div id="t106" class="t" style="transform:scaleX(0.9056);left:330.8px;top:436.00px;font-size:7.58px;color:#3c3c3c;font-weight:400;font-family:'Liberation Sans', sans-serif;">(Null)</div>
<div id="t107" class="t" style="transform:scaleX(0.9056);left:472.6px;top:436.00px;font-size:7.58px;color:#3c3c3c;font-weight:400;font-family:'Liberation Sans', sans-serif;">(Null)</div>
<div id="t108" class="t" style="transform:scaleX(0.9056);left:494.4px;top:436.00px;font-size:7.58px;color:#3c3c3c;font-weight:400;font-family:'Liberation Sans', sans-serif;">(Null)</div>
<div id="t109" class="t" style="transform:scaleX(0.9056);left:618.6px;top:436.00px;font-size:7.58px;color:#3c3c3c;font-weight:400;font-family:'Liberation Sans', sans-serif;">(Null)</div>
<div id="t110" class="t" style="transform:scaleX(0.9056);left:689.1px;top:436.00px;font-size:7.58px;color:#3c3c3c;font-weight:400;font-family:'Liberation Sans', sans-serif;">(Null)</div>
<div class="t" style="left:313px;width:14.5px;text-align:center;top:448.50px;font-size:7.58px;color:#444">4</div>
<div id="t111" class="t" style="transform:scaleX(0.9056);left:330.8px;top:449.00px;font-size:7.58px;color:#3c3c3c;font-weight:400;font-family:'Liberation Sans', sans-serif;">(Null)</div>
<div id="t112" class="t" style="transform:scaleX(0.9056);left:472.6px;top:449.00px;font-size:7.58px;color:#3c3c3c;font-weight:400;font-family:'Liberation Sans', sans-serif;">(Null)</div>
<div id="t113" class="t" style="transform:scaleX(0.9056);left:494.4px;top:449.00px;font-size:7.58px;color:#3c3c3c;font-weight:400;font-family:'Liberation Sans', sans-serif;">(Null)</div>
<div id="t114" class="t" style="transform:scaleX(0.9056);left:618.6px;top:449.00px;font-size:7.58px;color:#3c3c3c;font-weight:400;font-family:'Liberation Sans', sans-serif;">(Null)</div>
<div id="t115" class="t" style="transform:scaleX(0.9056);left:689.1px;top:449.00px;font-size:7.58px;color:#3c3c3c;font-weight:400;font-family:'Liberation Sans', sans-serif;">(Null)</div>
<div class="t" style="left:313px;width:14.5px;text-align:center;top:461.07px;font-size:7.58px;color:#444">5</div>
<div id="t116" class="t" style="transform:scaleX(0.9056);left:330.8px;top:461.00px;font-size:7.58px;color:#3c3c3c;font-weight:400;font-family:'Liberation Sans', sans-serif;">(Null)</div>
<div id="t117" class="t" style="transform:scaleX(0.9056);left:472.6px;top:461.00px;font-size:7.58px;color:#3c3c3c;font-weight:400;font-family:'Liberation Sans', sans-serif;">(Null)</div>
<div id="t118" class="t" style="transform:scaleX(0.9056);left:494.4px;top:461.00px;font-size:7.58px;color:#3c3c3c;font-weight:400;font-family:'Liberation Sans', sans-serif;">(Null)</div>
<div id="t119" class="t" style="transform:scaleX(0.9056);left:618.6px;top:461.00px;font-size:7.58px;color:#3c3c3c;font-weight:400;font-family:'Liberation Sans', sans-serif;">(Null)</div>
<div id="t120" class="t" style="transform:scaleX(0.9056);left:689.1px;top:461.00px;font-size:7.58px;color:#3c3c3c;font-weight:400;font-family:'Liberation Sans', sans-serif;">(Null)</div>
<div class="t" style="left:313px;width:14.5px;text-align:center;top:473.64px;font-size:7.58px;color:#444">6</div>
<div id="t121" class="t" style="transform:scaleX(0.8820);left:330.8px;top:474.00px;font-size:7.58px;color:#3c3c3c;font-weight:400;font-family:'Liberation Sans', sans-serif;">Betty's Music Store</div>
<div id="t122" class="t" style="transform:scaleX(0.9056);left:472.6px;top:474.00px;font-size:7.58px;color:#3c3c3c;font-weight:400;font-family:'Liberation Sans', sans-serif;">(Null)</div>
<div id="t123" class="t" style="transform:scaleX(0.9056);left:494.4px;top:474.00px;font-size:7.58px;color:#3c3c3c;font-weight:400;font-family:'Liberation Sans', sans-serif;">(Null)</div>
<div id="t124" class="t" style="transform:scaleX(0.9056);left:618.6px;top:474.00px;font-size:7.58px;color:#3c3c3c;font-weight:400;font-family:'Liberation Sans', sans-serif;">(Null)</div>
<div id="t125" class="t" style="transform:scaleX(0.9056);left:689.1px;top:474.00px;font-size:7.58px;color:#3c3c3c;font-weight:400;font-family:'Liberation Sans', sans-serif;">(Null)</div>
<div class="t" style="left:313px;width:14.5px;text-align:center;top:486.21px;font-size:7.58px;color:#444">7</div>
<div id="t126" class="t" style="transform:scaleX(0.8820);left:330.8px;top:487.00px;font-size:7.58px;color:#3c3c3c;font-weight:400;font-family:'Liberation Sans', sans-serif;">Betty's Music Store</div>
<div id="t127" class="t" style="transform:scaleX(0.9056);left:472.6px;top:487.00px;font-size:7.58px;color:#3c3c3c;font-weight:400;font-family:'Liberation Sans', sans-serif;">(Null)</div>
<div id="t128" class="t" style="transform:scaleX(0.9056);left:494.4px;top:487.00px;font-size:7.58px;color:#3c3c3c;font-weight:400;font-family:'Liberation Sans', sans-serif;">(Null)</div>
<div id="t129" class="t" style="transform:scaleX(0.9056);left:618.6px;top:487.00px;font-size:7.58px;color:#3c3c3c;font-weight:400;font-family:'Liberation Sans', sans-serif;">(Null)</div>
<div id="t130" class="t" style="transform:scaleX(0.9056);left:689.1px;top:487.00px;font-size:7.58px;color:#3c3c3c;font-weight:400;font-family:'Liberation Sans', sans-serif;">(Null)</div>
<div class="t" style="left:313px;width:14.5px;text-align:center;top:498.78px;font-size:7.58px;color:#444">8</div>
<div id="t131" class="t" style="transform:scaleX(0.8820);left:330.8px;top:499.00px;font-size:7.58px;color:#3c3c3c;font-weight:400;font-family:'Liberation Sans', sans-serif;">Betty's Music Store</div>
<div id="t132" class="t" style="transform:scaleX(0.9056);left:472.6px;top:499.00px;font-size:7.58px;color:#3c3c3c;font-weight:400;font-family:'Liberation Sans', sans-serif;">(Null)</div>
<div id="t133" class="t" style="transform:scaleX(0.9056);left:494.4px;top:499.00px;font-size:7.58px;color:#3c3c3c;font-weight:400;font-family:'Liberation Sans', sans-serif;">(Null)</div>
<div id="t134" class="t" style="transform:scaleX(0.9056);left:618.6px;top:499.00px;font-size:7.58px;color:#3c3c3c;font-weight:400;font-family:'Liberation Sans', sans-serif;">(Null)</div>
<div id="t135" class="t" style="transform:scaleX(0.9056);left:689.1px;top:499.00px;font-size:7.58px;color:#3c3c3c;font-weight:400;font-family:'Liberation Sans', sans-serif;">(Null)</div>
<div class="t" style="left:313px;width:14.5px;text-align:center;top:511.35px;font-size:7.58px;color:#444">9</div>
<div id="t136" class="t" style="transform:scaleX(0.8820);left:330.8px;top:512.00px;font-size:7.58px;color:#3c3c3c;font-weight:400;font-family:'Liberation Sans', sans-serif;">Betty's Music Store</div>
<div id="t137" class="t" style="transform:scaleX(0.9056);left:472.6px;top:512.00px;font-size:7.58px;color:#3c3c3c;font-weight:400;font-family:'Liberation Sans', sans-serif;">(Null)</div>
<div id="t138" class="t" style="transform:scaleX(0.9056);left:494.4px;top:512.00px;font-size:7.58px;color:#3c3c3c;font-weight:400;font-family:'Liberation Sans', sans-serif;">(Null)</div>
<div id="t139" class="t" style="transform:scaleX(0.9056);left:618.6px;top:512.00px;font-size:7.58px;color:#3c3c3c;font-weight:400;font-family:'Liberation Sans', sans-serif;">(Null)</div>
<div id="t140" class="t" style="transform:scaleX(0.9056);left:689.1px;top:512.00px;font-size:7.58px;color:#3c3c3c;font-weight:400;font-family:'Liberation Sans', sans-serif;">(Null)</div>
<div class="t" style="left:313px;width:14.5px;text-align:center;top:523.92px;font-size:7.58px;color:#444">10</div>
<div id="t141" class="t" style="transform:scaleX(0.8820);left:330.8px;top:524.00px;font-size:7.58px;color:#3c3c3c;font-weight:400;font-family:'Liberation Sans', sans-serif;">Betty's Music Store</div>
<div id="t142" class="t" style="transform:scaleX(0.9056);left:472.6px;top:524.00px;font-size:7.58px;color:#3c3c3c;font-weight:400;font-family:'Liberation Sans', sans-serif;">(Null)</div>
<div id="t143" class="t" style="transform:scaleX(0.9056);left:494.4px;top:524.00px;font-size:7.58px;color:#3c3c3c;font-weight:400;font-family:'Liberation Sans', sans-serif;">(Null)</div>
<div id="t144" class="t" style="transform:scaleX(0.9056);left:618.6px;top:524.00px;font-size:7.58px;color:#3c3c3c;font-weight:400;font-family:'Liberation Sans', sans-serif;">(Null)</div>
<div id="t145" class="t" style="transform:scaleX(0.9056);left:689.1px;top:524.00px;font-size:7.58px;color:#3c3c3c;font-weight:400;font-family:'Liberation Sans', sans-serif;">(Null)</div>
<div class="t" style="left:313px;width:14.5px;text-align:center;top:536.49px;font-size:7.58px;color:#444">11</div>
<div id="t146" class="t" style="transform:scaleX(0.8820);left:330.8px;top:537.00px;font-size:7.58px;color:#3c3c3c;font-weight:400;font-family:'Liberation Sans', sans-serif;">Betty's Music Store</div>
<div id="t147" class="t" style="transform:scaleX(0.9056);left:472.6px;top:537.00px;font-size:7.58px;color:#3c3c3c;font-weight:400;font-family:'Liberation Sans', sans-serif;">(Null)</div>
<div id="t148" class="t" style="transform:scaleX(0.9056);left:494.4px;top:537.00px;font-size:7.58px;color:#3c3c3c;font-weight:400;font-family:'Liberation Sans', sans-serif;">(Null)</div>
<div id="t149" class="t" style="transform:scaleX(0.9056);left:618.6px;top:537.00px;font-size:7.58px;color:#3c3c3c;font-weight:400;font-family:'Liberation Sans', sans-serif;">(Null)</div>
<div id="t150" class="t" style="transform:scaleX(0.9056);left:689.1px;top:537.00px;font-size:7.58px;color:#3c3c3c;font-weight:400;font-family:'Liberation Sans', sans-serif;">(Null)</div>
<div class="t" style="left:313px;width:14.5px;text-align:center;top:549.06px;font-size:7.58px;color:#444">12</div>
<div id="t151" class="t" style="transform:scaleX(0.8820);left:330.8px;top:549.00px;font-size:7.58px;color:#3c3c3c;font-weight:400;font-family:'Liberation Sans', sans-serif;">Betty's Music Store</div>
<div id="t152" class="t" style="transform:scaleX(0.9056);left:472.6px;top:549.00px;font-size:7.58px;color:#3c3c3c;font-weight:400;font-family:'Liberation Sans', sans-serif;">(Null)</div>
<div id="t153" class="t" style="transform:scaleX(0.9056);left:494.4px;top:549.00px;font-size:7.58px;color:#3c3c3c;font-weight:400;font-family:'Liberation Sans', sans-serif;">(Null)</div>
<div id="t154" class="t" style="transform:scaleX(0.9056);left:618.6px;top:549.00px;font-size:7.58px;color:#3c3c3c;font-weight:400;font-family:'Liberation Sans', sans-serif;">(Null)</div>
<div id="t155" class="t" style="transform:scaleX(0.9056);left:689.1px;top:549.00px;font-size:7.58px;color:#3c3c3c;font-weight:400;font-family:'Liberation Sans', sans-serif;">(Null)</div>
<div id="t156" class="t" style="transform:scaleX(0.9356);left:711px;top:411.00px;font-size:7.58px;color:#3c3c3c;font-weight:400;font-family:'Liberation Sans', sans-serif;">05/01/10</div>
<div id="t157" class="t" style="transform:scaleX(0.7241);left:772.8px;top:411.00px;font-size:7.58px;color:#3c3c3c;font-weight:400;font-family:'Liberation Sans', sans-serif;letter-spacing:0.45px;">CLASSICAL</div>
<div id="t158" class="t" style="transform:scaleX(0.7360);left:821.8px;top:411.00px;font-size:7.58px;color:#3c3c3c;font-weight:400;font-family:'Liberation Sans', sans-serif;letter-spacing:0.45px;">MUSIC DISTRIBU...</div>
<div id="t159" class="t" style="transform:scaleX(0.8646);left:711px;top:424.00px;font-size:7.58px;color:#3c3c3c;font-weight:400;font-family:'Liberation Sans', sans-serif;">10:17</div>
<div id="t160" class="t" style="transform:scaleX(0.8140);left:771.1px;top:424.00px;font-size:7.58px;color:#3c3c3c;font-weight:400;font-family:'Liberation Sans', sans-serif;letter-spacing:0.45px;">MONTHLY</div>
<div id="t161" class="t" style="transform:scaleX(0.7349);left:821.8px;top:424.00px;font-size:7.58px;color:#3c3c3c;font-weight:400;font-family:'Liberation Sans', sans-serif;letter-spacing:0.45px;">SHIPPING REPORT</div>
<div id="t162" class="t" style="transform:scaleX(0.7865);left:711px;top:436.00px;font-size:7.58px;color:#3c3c3c;font-weight:400;font-family:'Liberation Sans', sans-serif;letter-spacing:0.45px;">MSR94</div>
<div id="t163" class="t" style="transform:scaleX(0.8043);left:774.3px;top:436.00px;font-size:7.58px;color:#3c3c3c;font-weight:400;font-family:'Liberation Sans', sans-serif;letter-spacing:0.45px;">FROM 04/0</div>
<div id="t164" class="t" style="transform:scaleX(0.9213);left:821.8px;top:436.00px;font-size:7.58px;color:#3c3c3c;font-weight:400;font-family:'Liberation Sans', sans-serif;">1/10 TO 04/30/10</div>
<div id="t165" class="t" style="transform:scaleX(0.8629);left:711px;top:474.00px;font-size:7.58px;color:#3c3c3c;font-weight:400;font-family:'Liberation Sans', sans-serif;">CUSTOMER: Betty's Music Store</div>
<div id="t166" class="t" style="transform:scaleX(0.8722);left:730.2px;top:487.00px;font-size:7.58px;color:#3c3c3c;font-weight:400;font-family:'Liberation Sans', sans-serif;">Muscatine Plaza</div>
<div id="t167" class="t" style="transform:scaleX(0.8939);left:730.2px;top:499.00px;font-size:7.58px;color:#3c3c3c;font-weight:400;font-family:'Liberation Sans', sans-serif;">200 Lower Muscatine</div>
<div id="t168" class="t" style="transform:scaleX(0.8602);left:730.2px;top:512.00px;font-size:7.58px;color:#3c3c3c;font-weight:400;font-family:'Liberation Sans', sans-serif;">Cedar Falls, IA 50613</div>
<div id="t169" class="t" style="transform:scaleX(0.7521);left:730.2px;top:524.00px;font-size:7.58px;color:#3c3c3c;font-weight:400;font-family:'Liberation Sans', sans-serif;letter-spacing:0.45px;">USA</div>
<div style="left:890.6px;top:391px;width:9.4px;height:160px;background:#e8e8e8;border-left:1px solid #d6d6d6"></div>
<div style="left:890.6px;top:394.4px;width:9.4px;height:9.7px;background:#fff;border:1px solid #d0d0d0"></div>
<svg style="position:absolute;left:891px;top:396px;" width="9" height="6" viewBox="0 0 9 6"><polygon points="1.8,4.4 4.5,1.8 7.2,4.4" fill="#444"/></svg>
<div style="left:890.6px;top:405.2px;width:9.4px;height:4.5px;background:#fff;border:1px solid #d0d0d0"></div>
<div style="left:890.6px;top:539.5px;width:9.4px;height:11px;background:#fff;border:1px solid #d0d0d0"></div>
<svg style="position:absolute;left:891px;top:542px;" width="9" height="6" viewBox="0 0 9 6"><polygon points="1.8,1.6 4.5,4.4 7.2,1.6" fill="#444"/></svg>
<div style="left:595px;top:390.7px;width:22.2px;height:3.1px;background:#ee3a62"></div>
<div style="left:0px;top:551px;width:900px;height:18px;background:#173753"></div>
<div style="left:875px;top:551px;width:25px;height:18px;background:#3a6fa0"></div>
<svg style="position:absolute;left:880px;top:552px;" width="15" height="16" viewBox="0 0 15 16"><path d="M1,2.6 H13.8 M1,13.5 H13.8" stroke="#b5c9dc" stroke-width="0.9"/><path d="M7.6,4.3 V11.8 M5.3,6.4 L7.6,4.2 L9.9,6.4 M5.3,9.7 L7.6,11.9 L9.9,9.7" fill="none" stroke="#d5e0ea" stroke-width="0.9"/></svg>
</body></html>
